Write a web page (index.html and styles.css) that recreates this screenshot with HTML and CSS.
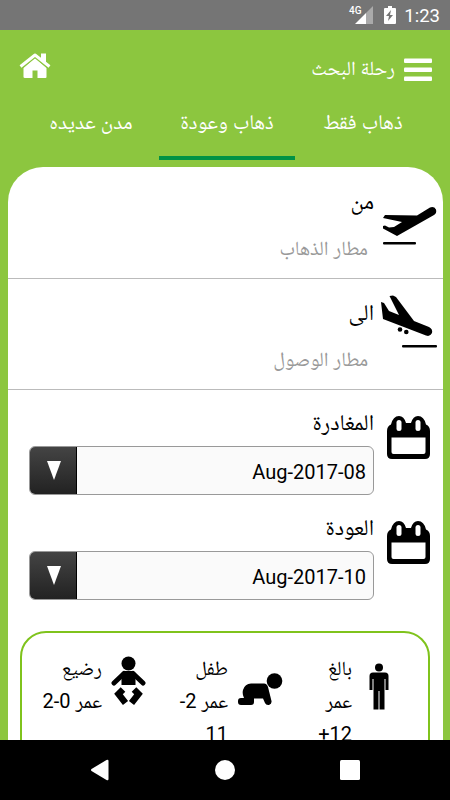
FILE: index.html
```html
<!DOCTYPE html>
<html lang="ar" dir="rtl">

<head>
    <meta charset="utf-8">
    <title>رحلة البحث</title>
    <link rel="stylesheet" href="styles.css">
</head>

<body>
    <div class="status-bar">
        <span class="clock">1:23</span>
        <svg class="battery" width="12" height="18" viewBox="0 0 12 18">
            <path fill="#fff" d="M4 0h4v2h3q1 0 1 1v14q0 1-1 1H1q-1 0-1-1V3q0-1 1-1h3z" />
            <path fill="#757575" d="M7 4L2 10h3l-1 5 5-6H6z" />
        </svg>
        <svg class="signal" width="24" height="19" viewBox="0 0 24 19">
            <path fill="#aaa" d="M23 0v18H16V7z" />
            <path fill="#fff" d="M16 7v11H5z" />
            <text class="network" x="11.500" y="8">4G</text>
        </svg>
    </div>

    <div class="header">
        <svg class="menu" width="28" height="24" viewBox="0 0 28 24" fill="#fff">
            <rect y="0.5" width="28" height="4.5" rx="1" />
            <rect y="9.5" width="28" height="4.5" rx="1" />
            <rect y="18.5" width="28" height="4.5" rx="1" />
        </svg>
        <h1>رحلة البحث</h1>
        <svg class="home" width="32" height="26" viewBox="0 0 32 26">
            <path fill="#fff" d="M16 5L27.500 15v9q0 1-1 1H18.500v-7.500h-5V25H6q-1.500 0-1.500-1v-9z" />
            <path fill="none" stroke="#8cc63f" stroke-width="4.500" d="M1 14.500L16 2.500l15 12" />
            <path fill="#fff" d="M22 0.500h5v10l-5-4z" />
            <path fill="none" stroke="#fff" stroke-width="3" stroke-linejoin="round" d="M1.500 13.500L16 2l14.500 11.500" />
        </svg>
    </div>

    <div class="tabs">
        <a class="tab">ذهاب فقط</a>
        <a class="tab active">ذهاب وعودة</a>
        <a class="tab">مدن عديده</a>
    </div>

    <div class="card">
        <div class="airport">
            <svg class="plane" width="56" height="42" viewBox="0 0 56 42">
                <path d="M4 9L36 9.500 49 1.500Q53 0 55 3.500 56 7 53 9L16 30 2 22.500 2 20 4 19.500 8 21.500 13 21 21 16 2 12z" />
                <rect x="2" y="36" width="33" height="2.500" rx="1" />
            </svg>
            <div class="field">
                <label>من</label>
                <p>مطار الذهاب</p>
            </div>
        </div>
        <div class="airport">
            <svg class="plane landing" width="56" height="54" viewBox="0 0 56 54">
                <path d="M0 7L3 8 8 16 18 20 8.500 1 12 0.500 15 2 33 26 48 32Q52 34 51 38 49 42 45 40.500L2 24z" />
                <circle cx="19" cy="34.500" r="2.300" />
                <circle cx="25.300" cy="37" r="2.300" />
                <rect x="21" y="50" width="35" height="2.500" rx="1" />
            </svg>
            <div class="field">
                <label>الى</label>
                <p>مطار الوصول</p>
            </div>
        </div>

        <div class="date">
            <svg class="calendar" width="44" height="44" viewBox="0 0 44 44">
                <path d="M0 15Q0 10 4 8.500 6 0 12 0 17 0 19 7H24Q26 0 31 0 37 0 39 8.500 43 10 43 15V38Q43 43 38 43H5Q0 43 0 38z" />
                <path fill="#fff" d="M4.500 21.500H38.500V36q0 2-2 2H6.500q-2 0-2-2z" />
                <rect x="9.500" y="4" width="5" height="11" rx="2.500" fill="#fff" />
                <rect x="28.500" y="4" width="5" height="11" rx="2.500" fill="#fff" />
            </svg>
            <div class="field">
                <label>المغادرة</label>
                <div class="select">
                    <span dir="ltr">Aug-2017-08</span>
                    <div class="arrow"><svg width="14" height="19" viewBox="0 0 14 19"><path fill="#fff" d="M0 0H14L7 19z" /></svg></div>
                </div>
            </div>
        </div>
        <div class="date">
            <svg class="calendar" width="44" height="44" viewBox="0 0 44 44">
                <path d="M0 15Q0 10 4 8.500 6 0 12 0 17 0 19 7H24Q26 0 31 0 37 0 39 8.500 43 10 43 15V38Q43 43 38 43H5Q0 43 0 38z" />
                <path fill="#fff" d="M4.500 21.500H38.500V36q0 2-2 2H6.500q-2 0-2-2z" />
                <rect x="9.500" y="4" width="5" height="11" rx="2.500" fill="#fff" />
                <rect x="28.500" y="4" width="5" height="11" rx="2.500" fill="#fff" />
            </svg>
            <div class="field">
                <label>العودة</label>
                <div class="select">
                    <span dir="ltr">Aug-2017-10</span>
                    <div class="arrow"><svg width="14" height="19" viewBox="0 0 14 19"><path fill="#fff" d="M0 0H14L7 19z" /></svg></div>
                </div>
            </div>
        </div>

        <div class="passengers">
            <div class="passenger adult">
                <svg width="20" height="48" viewBox="0 0 20 48">
                    <circle cx="10" cy="4.500" r="4" />
                    <path d="M4 9.500H16Q19.500 9.500 19.500 13V27H16.500V16H15.500V46.500H10.500V28H9.500V46.500H4.500V16H3.500V27H0.500V13Q0.500 9.500 4 9.500z" />
                </svg>
                <p>بالغ<br>عمر<br>12+</p>
            </div>
            <div class="passenger child">
                <svg width="46" height="34" viewBox="0 0 46 34">
                    <circle cx="36.500" cy="8" r="7.800" />
                    <path d="M13 10.500H26Q29 10.500 30 14L33.500 28Q34 31 31 32 28 32.500 27 30L25 25.500H16V29Q16 32 13 32H3Q0 32 0 29V28Q0 25 3 25H6Q4 21 5 17 7 10.500 13 10.500z" />
                </svg>
                <p>طفل<br>عمر 2-<br>11</p>
            </div>
            <div class="passenger infant">
                <svg width="36" height="50" viewBox="0 0 36 50">
                    <circle cx="17.500" cy="7.500" r="7" />
                    <path d="M12.500 15H22.500L24.500 17V29H10.500V17z" />
                    <path class="limb" d="M13 17.500L3 27M22 17.500L32 27" />
                    <path class="leg" d="M12 33.500L7.500 38 14.500 47M23 33.500L27.500 38 20.500 47" />
                </svg>
                <p>رضيع<br>عمر 0-2</p>
            </div>
        </div>
    </div>

    <div class="nav-bar" dir="ltr">
        <svg width="20" height="22" viewBox="0 0 20 22"><path fill="#fff" d="M1.500 10L16.500 1q2-1 2 1v18q0 2-2 1L1.500 12q-1-1 0-2z" /></svg>
        <svg width="20" height="20" viewBox="0 0 20 20"><circle cx="10" cy="10" r="10" fill="#fff" /></svg>
        <svg width="20" height="20" viewBox="0 0 20 20"><rect width="20" height="20" rx="1.500" fill="#fff" /></svg>
    </div>
</body>

</html>
```
FILE: styles.css
```css
* {
    box-sizing: border-box;
}

body {
    margin: 0;
    height: 800px;
    overflow: hidden;
    display: flex;
    flex-direction: column;
    background-color: #8cc63f;
    color: #000;
    font-family: Roboto, "Noto Naskh Arabic", "Noto Sans Arabic", "DejaVu Sans", sans-serif;
    font-size: 20px;
}

h1,
p {
    margin: 0;
    font-weight: normal;
}

svg {
    display: block;
    flex: none;
}

.status-bar {
    height: 30px;
    flex: none;
    display: flex;
    padding: 6px 10px 0;
    background-color: #757575;
    color: #fff;
}

.clock {
    width: 35px;
    font-size: 18.5px;
    line-height: 20px;
}

.battery {
    margin-right: 9px;
}

.signal {
    margin-right: 10px;
    overflow: visible;
}

.network {
    direction: ltr;
    text-anchor: end;
    fill: #fff;
    font-size: 10px;
    font-weight: 500;
}

.header {
    height: 73px;
    flex: none;
    display: flex;
    align-items: center;
    padding: 7px 18px 0 19px;
    color: #fff;
}

.header h1 {
    margin-right: 9px;
    padding-top: 1px;
    font-size: 20px;
}

.home {
    margin-right: auto;
    margin-bottom: 8px;
}

.tabs {
    height: 57px;
    flex: none;
    display: flex;
    padding: 0 19px 0 23px;
}

.tab {
    flex: 1;
    border-bottom: 4px solid transparent;
    color: #fff;
    font-size: 21px;
    line-height: 38px;
    text-align: center;
}

.active {
    border-color: #009245;
}

.card {
    flex: 1;
    min-height: 0;
    overflow: hidden;
    margin: 7px 7px 0 8px;
    padding-top: 1px;
    border-radius: 35px 35px 0 0;
    background-color: #fff;
}

.airport {
    height: 111px;
    display: flex;
    padding-right: 6px;
    border-bottom: 1px solid #bbb;
}

.plane {
    margin-top: 38px;
}

.landing {
    margin-top: 16px;
}

.airport .field {
    padding: 18px 7px 0 0;
}

.airport label,
.date label {
    display: block;
    font-size: 22.5px;
    line-height: 30px;
}

.airport p {
    margin: 16px 6px 0 0;
    line-height: 32px;
    color: #999;
}

.date {
    height: 105px;
    display: flex;
    padding: 18px 12px 0 21px;
}

.calendar {
    margin-top: 8px;
}

.date .field {
    flex: 1;
    margin-right: 13px;
}

.date label {
    line-height: 28px;
}

.select {
    height: 49px;
    display: flex;
    align-items: center;
    justify-content: space-between;
    margin-top: 10px;
    padding-right: 7px;
    border: 1px solid #999;
    border-radius: 6px;
    background-color: #fafafa;
    overflow: hidden;
}

.select span {
    padding-top: 3px;
}

.arrow {
    width: 47px;
    height: 47px;
    display: flex;
    align-items: center;
    justify-content: center;
    padding-left: 2px;
    border-right: 1px solid #000;
    background: linear-gradient(#444, #222);
}

.passengers {
    height: 180px;
    display: flex;
    margin: 31px 13px 0 12px;
    padding: 19px 0;
    border: 2px solid #7fc31c;
    border-radius: 26px;
}

.passenger {
    display: flex;
}

.passenger p {
    line-height: 33px;
}

.adult {
    width: 144px;
    padding-right: 39px;
}

.adult svg {
    margin-top: 11px;
}

.adult p {
    margin-right: 17px;
}

.child {
    width: 137px;
}

.child svg {
    margin-top: 21px;
}

.child p {
    margin-right: 10px;
}

.infant svg {
    margin-top: 4px;
}

.infant p {
    margin-right: 9px;
}

.limb,
.leg {
    fill: none;
    stroke: #000;
    stroke-width: 5;
    stroke-linecap: round;
}

.leg {
    stroke-width: 6.5;
    stroke-linecap: butt;
}

.nav-bar {
    height: 60px;
    flex: none;
    display: flex;
    align-items: center;
    justify-content: space-between;
    padding: 0 90px;
    background-color: #000;
}
```
